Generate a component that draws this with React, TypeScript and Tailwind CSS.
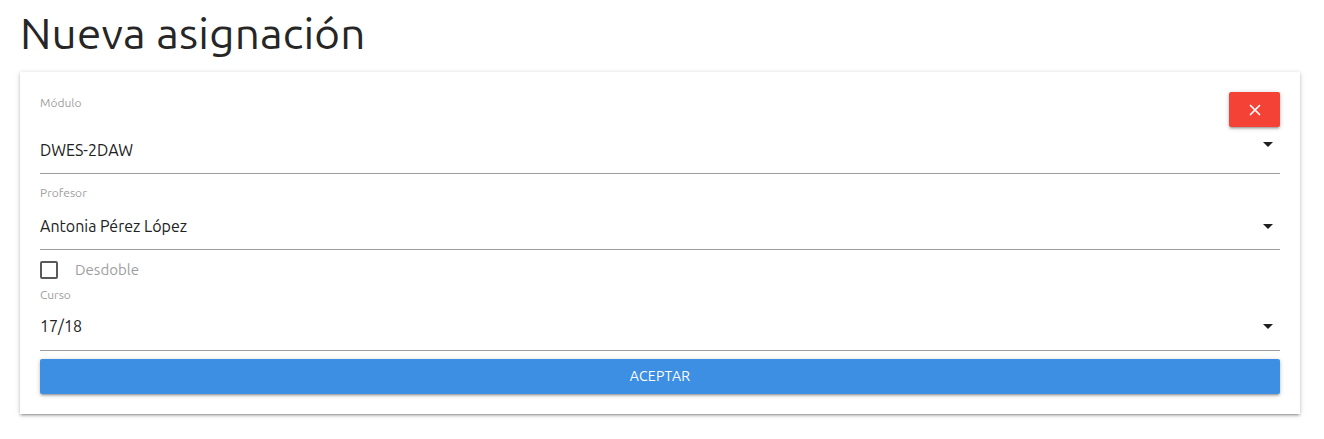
import { X } from "lucide-react";

const Arrow = () => (
  <svg width="10" height="5" viewBox="0 0 10 5" className="shrink-0">
    <path d="M0 0h10L5 5z" fill="#1f1f1f" />
  </svg>
);

const App = () => (
  <div className="min-h-[439px] bg-white px-[20px] pb-[20px] font-['Ubuntu','Open_Sans',sans-serif] text-[#212121]">
    <h1 className="pt-[4px] pb-[10px] text-[44px] leading-[58px] font-normal tracking-[0.2px] text-[#262626]">
      Nueva asignación
    </h1>
    <div className="relative w-[1280px] bg-white px-[20px] pt-[23px] pb-[20px] shadow-[0_2px_2px_0_rgba(0,0,0,0.14),0_3px_1px_-2px_rgba(0,0,0,0.12),0_1px_5px_0_rgba(0,0,0,0.2)]">
      <button className="absolute top-[20px] right-[20px] flex h-[35px] w-[51px] items-center justify-center rounded-[2px] bg-[#f44336] text-white shadow-[0_2px_2px_0_rgba(0,0,0,0.14),0_3px_1px_-2px_rgba(0,0,0,0.12),0_1px_5px_0_rgba(0,0,0,0.2)]">
        <X size={18} strokeWidth={2.2} />
      </button>

      <div className="border-b border-[#9e9e9e]">
        <div className="text-[12px] leading-[16px] text-[#9e9e9e]">Módulo</div>
        <div className="mt-[27px] mb-[11px] flex h-[24px] items-center justify-between pr-[7px]">
          <span className="text-[16px]">DWES-2DAW</span>
          <div className="-mt-[12px]">
            <Arrow />
          </div>
        </div>
      </div>

      <div className="border-b border-[#9e9e9e]">
        <div className="mt-[11px] text-[12px] leading-[16px] text-[#9e9e9e]">Profesor</div>
        <div className="mt-[13px] mb-[11px] flex h-[24px] items-center justify-between pr-[7px]">
          <span className="text-[16px]">Antonia Pérez López</span>
          <Arrow />
        </div>
      </div>

      <label className="mt-[11px] flex h-[18px] items-center gap-[17px]">
        <span className="h-[18px] w-[18px] rounded-[2px] border-2 border-[#5a5a5a]" />
        <span className="text-[15px] text-[#9e9e9e]">Desdoble</span>
      </label>

      <div className="border-b border-[#9e9e9e]">
        <div className="mt-[8px] text-[12px] leading-[16px] text-[#9e9e9e]">Curso</div>
        <div className="mt-[11px] mb-[12px] flex h-[24px] items-center justify-between pr-[7px]">
          <span className="text-[16px]">17/18</span>
          <Arrow />
        </div>
      </div>

      <button className="mt-[8px] flex h-[35px] w-full items-center justify-center rounded-[2px] bg-[#3d8fe3] text-[14px] tracking-[0.3px] text-white shadow-[0_2px_2px_0_rgba(0,0,0,0.14),0_3px_1px_-2px_rgba(0,0,0,0.12),0_1px_5px_0_rgba(0,0,0,0.2)]">
        ACEPTAR
      </button>
    </div>
  </div>
);

export default App;
